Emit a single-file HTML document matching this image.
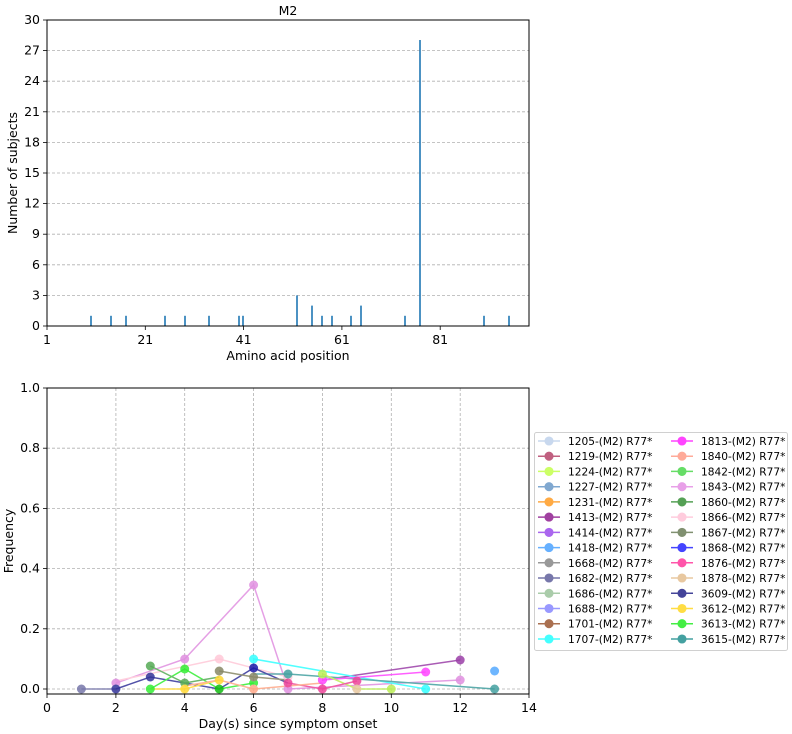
<!DOCTYPE html>
<html><head><meta charset="utf-8"><style>
html,body{margin:0;padding:0;background:#fff}
svg{display:block;font-family:"DejaVu Sans","Liberation Sans",sans-serif}
</style></head><body>
<svg width="792" height="734" viewBox="0 0 792 734" xmlns="http://www.w3.org/2000/svg">
<rect width="792" height="734" fill="#fff"/>
<!-- TOP PLOT -->
<text x="288" y="15" font-size="12.5" text-anchor="middle">M2</text>
<g stroke="#b0b0b0" stroke-dasharray="3,2" stroke-width="0.8">
<line x1="47" x2="529" y1="295.4" y2="295.4"/><line x1="47" x2="529" y1="264.8" y2="264.8"/>
<line x1="47" x2="529" y1="234.2" y2="234.2"/><line x1="47" x2="529" y1="203.6" y2="203.6"/>
<line x1="47" x2="529" y1="173" y2="173"/><line x1="47" x2="529" y1="142.4" y2="142.4"/>
<line x1="47" x2="529" y1="111.8" y2="111.8"/><line x1="47" x2="529" y1="81.2" y2="81.2"/>
<line x1="47" x2="529" y1="50.6" y2="50.6"/>
</g>
<g stroke="#1f77b4" stroke-width="1.6">
<line x1="91" x2="91" y1="326" y2="315.8"/><line x1="111" x2="111" y1="326" y2="315.8"/>
<line x1="126" x2="126" y1="326" y2="315.8"/><line x1="165" x2="165" y1="326" y2="315.8"/>
<line x1="185" x2="185" y1="326" y2="315.8"/><line x1="209" x2="209" y1="326" y2="315.8"/>
<line x1="239" x2="239" y1="326" y2="315.8"/><line x1="243" x2="243" y1="326" y2="315.8"/>
<line x1="297" x2="297" y1="326" y2="295.4"/><line x1="312" x2="312" y1="326" y2="305.6"/>
<line x1="322" x2="322" y1="326" y2="315.8"/><line x1="332" x2="332" y1="326" y2="315.8"/>
<line x1="351" x2="351" y1="326" y2="315.8"/><line x1="361" x2="361" y1="326" y2="305.6"/>
<line x1="405" x2="405" y1="326" y2="315.8"/><line x1="420" x2="420" y1="326" y2="40"/>
<line x1="484" x2="484" y1="326" y2="315.8"/><line x1="509" x2="509" y1="326" y2="315.8"/>
</g>
<rect x="47" y="20" width="482" height="306" fill="none" stroke="#000" stroke-width="1"/>
<g stroke="#000" stroke-width="0.8">
<line x1="43" x2="47" y1="326" y2="326"/><line x1="43" x2="47" y1="295.4" y2="295.4"/><line x1="43" x2="47" y1="264.8" y2="264.8"/><line x1="43" x2="47" y1="234.2" y2="234.2"/><line x1="43" x2="47" y1="203.6" y2="203.6"/><line x1="43" x2="47" y1="173" y2="173"/><line x1="43" x2="47" y1="142.4" y2="142.4"/><line x1="43" x2="47" y1="111.8" y2="111.8"/><line x1="43" x2="47" y1="81.2" y2="81.2"/><line x1="43" x2="47" y1="50.6" y2="50.6"/><line x1="43" x2="47" y1="20" y2="20"/>
<line x1="47" x2="47" y1="326" y2="330"/><line x1="145.3" x2="145.3" y1="326" y2="330"/><line x1="243.6" x2="243.6" y1="326" y2="330"/><line x1="341.9" x2="341.9" y1="326" y2="330"/><line x1="440.2" x2="440.2" y1="326" y2="330"/>
</g>
<g font-size="12.5" text-anchor="end">
<text x="40" y="330">0</text><text x="40" y="299.4">3</text><text x="40" y="268.8">6</text><text x="40" y="238.2">9</text><text x="40" y="207.6">12</text><text x="40" y="177">15</text><text x="40" y="146.4">18</text><text x="40" y="115.8">21</text><text x="40" y="85.2">24</text><text x="40" y="54.6">27</text><text x="40" y="24">30</text>
</g>
<g font-size="12.5" text-anchor="middle">
<text x="47" y="344">1</text><text x="145.3" y="344">21</text><text x="243.6" y="344">41</text><text x="341.9" y="344">61</text><text x="440.2" y="344">81</text>
<text x="288" y="360">Amino acid position</text>
</g>
<text transform="translate(17,173) rotate(-90)" font-size="12.5" text-anchor="middle">Number of subjects</text>

<!-- BOTTOM PLOT -->
<g stroke="#b0b0b0" stroke-dasharray="3,2" stroke-width="0.8">
<line x1="115.9" x2="115.9" y1="388" y2="694"/><line x1="184.7" x2="184.7" y1="388" y2="694"/><line x1="253.6" x2="253.6" y1="388" y2="694"/><line x1="322.4" x2="322.4" y1="388" y2="694"/><line x1="391.3" x2="391.3" y1="388" y2="694"/><line x1="460.2" x2="460.2" y1="388" y2="694"/>
<line x1="47" x2="529" y1="689" y2="689"/><line x1="47" x2="529" y1="628.8" y2="628.8"/><line x1="47" x2="529" y1="568.6" y2="568.6"/><line x1="47" x2="529" y1="508.4" y2="508.4"/><line x1="47" x2="529" y1="448.2" y2="448.2"/>
</g>
<g fill="none" stroke-width="1.5" opacity="0.85">
<polyline stroke="#e08fe0" points="115.9,683 184.7,659 253.6,585 288,689 460.2,680"/>
<polyline stroke="#9b3fa8" points="322.4,680 460.2,660"/>
<polyline stroke="#33ffff" points="253.6,659 425.7,689"/>
<polyline stroke="#ffc8d8" points="115.9,681 219.2,659 288,677"/>
<polyline stroke="#44a0a0" points="253.6,674 288,674 494.6,689"/>
<polyline stroke="#ff44ff" points="322.4,680 425.7,672"/>
<polyline stroke="#333399" points="115.9,689 150.3,677 219.2,689 253.6,668 288,683"/>
<polyline stroke="#7777aa" points="81.4,689 115.9,689"/>
<polyline stroke="#33ee33" points="150.3,689 184.7,669 219.2,689 253.6,683"/>
<polyline stroke="#55aa55" points="150.3,666 184.7,683 219.2,677"/>
<polyline stroke="#bbee55" points="322.4,674 356.9,689 391.3,689"/>
<polyline stroke="#ee4499" points="288,683 322.4,689 356.9,681"/>
<polyline stroke="#ffd833" points="150.3,689 184.7,689 219.2,680"/>
<polyline stroke="#888866" points="219.2,671 253.6,677 288,680"/>
<polyline stroke="#ffa888" points="184.7,686 219.2,680 253.6,689 322.4,683"/>
</g>
<g opacity="0.85">
<circle cx="115.9" cy="683" r="4.5" fill="#e08fe0"/><circle cx="184.7" cy="659" r="4.5" fill="#e08fe0"/><circle cx="253.6" cy="585" r="4.5" fill="#e08fe0"/><circle cx="288" cy="689" r="4.5" fill="#e08fe0"/><circle cx="460.2" cy="680" r="4.5" fill="#e08fe0"/>
<circle cx="322.4" cy="680" r="4.5" fill="#9b3fa8"/><circle cx="460.2" cy="660" r="4.5" fill="#9b3fa8"/>
<circle cx="253.6" cy="659" r="4.5" fill="#33ffff"/><circle cx="425.7" cy="689" r="4.5" fill="#33ffff"/>
<circle cx="219.2" cy="659" r="4.5" fill="#ffc8d8"/><circle cx="288" cy="677" r="4.5" fill="#ffc8d8"/>
<circle cx="288" cy="674" r="4.5" fill="#44a0a0"/><circle cx="494.6" cy="689" r="4.5" fill="#44a0a0"/>
<circle cx="494.6" cy="671" r="4.5" fill="#55aaff"/>
<circle cx="425.7" cy="672" r="4.5" fill="#ff44ff"/><circle cx="322.4" cy="680" r="4.5" fill="#ff44ff"/>
<circle cx="115.9" cy="689" r="4.5" fill="#333399"/><circle cx="150.3" cy="677" r="4.5" fill="#333399"/><circle cx="253.6" cy="668" r="4.5" fill="#1a1aaa"/>
<circle cx="81.4" cy="689" r="4.5" fill="#7777aa"/>
<circle cx="150.3" cy="689" r="4.5" fill="#33ee33"/><circle cx="184.7" cy="669" r="4.5" fill="#33ee33"/><circle cx="219.2" cy="689" r="4.5" fill="#11bb11"/><circle cx="253.6" cy="683" r="4.5" fill="#33ee33"/>
<circle cx="150.3" cy="666" r="4.5" fill="#55aa55"/><circle cx="184.7" cy="683" r="4.5" fill="#55aa55"/>
<circle cx="322.4" cy="674" r="4.5" fill="#bbee55"/><circle cx="391.3" cy="689" r="4.5" fill="#bbee55"/>
<circle cx="288" cy="683" r="4.5" fill="#ee4499"/><circle cx="322.4" cy="689" r="4.5" fill="#ee4499"/><circle cx="356.9" cy="681" r="4.5" fill="#ee4499"/>
<circle cx="184.7" cy="689" r="4.5" fill="#ffd833"/><circle cx="219.2" cy="680" r="4.5" fill="#ffd833"/>
<circle cx="219.2" cy="671" r="4.5" fill="#888866"/><circle cx="253.6" cy="677" r="4.5" fill="#888866"/>
<circle cx="253.6" cy="689" r="4.5" fill="#ffa888"/><circle cx="356.9" cy="689" r="4.5" fill="#e8c8a0"/>
</g>
<rect x="47" y="388" width="482" height="306" fill="none" stroke="#000" stroke-width="1"/>
<g stroke="#000" stroke-width="0.8">
<line x1="43" x2="47" y1="689" y2="689"/><line x1="43" x2="47" y1="628.8" y2="628.8"/><line x1="43" x2="47" y1="568.6" y2="568.6"/><line x1="43" x2="47" y1="508.4" y2="508.4"/><line x1="43" x2="47" y1="448.2" y2="448.2"/><line x1="43" x2="47" y1="388" y2="388"/>
<line x1="47" x2="47" y1="694" y2="698"/><line x1="115.9" x2="115.9" y1="694" y2="698"/><line x1="184.7" x2="184.7" y1="694" y2="698"/><line x1="253.6" x2="253.6" y1="694" y2="698"/><line x1="322.4" x2="322.4" y1="694" y2="698"/><line x1="391.3" x2="391.3" y1="694" y2="698"/><line x1="460.2" x2="460.2" y1="694" y2="698"/><line x1="529" x2="529" y1="694" y2="698"/>
</g>
<g font-size="12.5" text-anchor="end">
<text x="40" y="693">0.0</text><text x="40" y="632.8">0.2</text><text x="40" y="572.6">0.4</text><text x="40" y="512.4">0.6</text><text x="40" y="452.2">0.8</text><text x="40" y="392">1.0</text>
</g>
<g font-size="12.5" text-anchor="middle">
<text x="47" y="712">0</text><text x="115.9" y="712">2</text><text x="184.7" y="712">4</text><text x="253.6" y="712">6</text><text x="322.4" y="712">8</text><text x="391.3" y="712">10</text><text x="460.2" y="712">12</text><text x="529" y="712">14</text>
<text x="288" y="728">Day(s) since symptom onset</text>
</g>
<text transform="translate(13,541) rotate(-90)" font-size="12.5" text-anchor="middle">Frequency</text>

<!-- LEGEND -->
<rect x="534.5" y="432.5" width="253" height="218" rx="2" fill="#fff" stroke="#d0d0d0"/>
<g font-size="10.5">
<g id="c1">
</g>
</g>
<g font-size="10.6" fill="#000">
<text x="568" y="445">1205-(M2) R77*</text><text x="568" y="460.2">1219-(M2) R77*</text><text x="568" y="475.4">1224-(M2) R77*</text><text x="568" y="490.7">1227-(M2) R77*</text><text x="568" y="505.9">1231-(M2) R77*</text><text x="568" y="521.1">1413-(M2) R77*</text><text x="568" y="536.4">1414-(M2) R77*</text><text x="568" y="551.6">1418-(M2) R77*</text><text x="568" y="566.8">1668-(M2) R77*</text><text x="568" y="582">1682-(M2) R77*</text><text x="568" y="597.3">1686-(M2) R77*</text><text x="568" y="612.5">1688-(M2) R77*</text><text x="568" y="627.7">1701-(M2) R77*</text><text x="568" y="643">1707-(M2) R77*</text>
<text x="701" y="445">1813-(M2) R77*</text><text x="701" y="460.2">1840-(M2) R77*</text><text x="701" y="475.4">1842-(M2) R77*</text><text x="701" y="490.7">1843-(M2) R77*</text><text x="701" y="505.9">1860-(M2) R77*</text><text x="701" y="521.1">1866-(M2) R77*</text><text x="701" y="536.4">1867-(M2) R77*</text><text x="701" y="551.6">1868-(M2) R77*</text><text x="701" y="566.8">1876-(M2) R77*</text><text x="701" y="582">1878-(M2) R77*</text><text x="701" y="597.3">3609-(M2) R77*</text><text x="701" y="612.5">3612-(M2) R77*</text><text x="701" y="627.7">3613-(M2) R77*</text><text x="701" y="643">3615-(M2) R77*</text>
</g>
<g stroke-width="1.5">
<g stroke="#c8d8ee" fill="#c8d8ee"><line x1="538" x2="560" y1="441" y2="441"/><circle cx="549" cy="441" r="3.8"/></g>
<g stroke="#c06080" fill="#c06080"><line x1="538" x2="560" y1="456.2" y2="456.2"/><circle cx="549" cy="456.2" r="3.8"/></g>
<g stroke="#ccff66" fill="#ccff66"><line x1="538" x2="560" y1="471.4" y2="471.4"/><circle cx="549" cy="471.4" r="3.8"/></g>
<g stroke="#80a8d0" fill="#80a8d0"><line x1="538" x2="560" y1="486.7" y2="486.7"/><circle cx="549" cy="486.7" r="3.8"/></g>
<g stroke="#ffaa44" fill="#ffaa44"><line x1="538" x2="560" y1="501.9" y2="501.9"/><circle cx="549" cy="501.9" r="3.8"/></g>
<g stroke="#a040a0" fill="#a040a0"><line x1="538" x2="560" y1="517.1" y2="517.1"/><circle cx="549" cy="517.1" r="3.8"/></g>
<g stroke="#aa66ee" fill="#aa66ee"><line x1="538" x2="560" y1="532.4" y2="532.4"/><circle cx="549" cy="532.4" r="3.8"/></g>
<g stroke="#66b0ff" fill="#66b0ff"><line x1="538" x2="560" y1="547.6" y2="547.6"/><circle cx="549" cy="547.6" r="3.8"/></g>
<g stroke="#999999" fill="#999999"><line x1="538" x2="560" y1="562.8" y2="562.8"/><circle cx="549" cy="562.8" r="3.8"/></g>
<g stroke="#7777aa" fill="#7777aa"><line x1="538" x2="560" y1="578" y2="578"/><circle cx="549" cy="578" r="3.8"/></g>
<g stroke="#aaccaa" fill="#aaccaa"><line x1="538" x2="560" y1="593.3" y2="593.3"/><circle cx="549" cy="593.3" r="3.8"/></g>
<g stroke="#9999ff" fill="#9999ff"><line x1="538" x2="560" y1="608.5" y2="608.5"/><circle cx="549" cy="608.5" r="3.8"/></g>
<g stroke="#aa7050" fill="#aa7050"><line x1="538" x2="560" y1="623.7" y2="623.7"/><circle cx="549" cy="623.7" r="3.8"/></g>
<g stroke="#44ffff" fill="#44ffff"><line x1="538" x2="560" y1="639" y2="639"/><circle cx="549" cy="639" r="3.8"/></g>
<g stroke="#ff44ff" fill="#ff44ff"><line x1="671" x2="693" y1="441" y2="441"/><circle cx="682" cy="441" r="3.8"/></g>
<g stroke="#ffaa99" fill="#ffaa99"><line x1="671" x2="693" y1="456.2" y2="456.2"/><circle cx="682" cy="456.2" r="3.8"/></g>
<g stroke="#66dd66" fill="#66dd66"><line x1="671" x2="693" y1="471.4" y2="471.4"/><circle cx="682" cy="471.4" r="3.8"/></g>
<g stroke="#e8a0e8" fill="#e8a0e8"><line x1="671" x2="693" y1="486.7" y2="486.7"/><circle cx="682" cy="486.7" r="3.8"/></g>
<g stroke="#55a055" fill="#55a055"><line x1="671" x2="693" y1="501.9" y2="501.9"/><circle cx="682" cy="501.9" r="3.8"/></g>
<g stroke="#ffccdd" fill="#ffccdd"><line x1="671" x2="693" y1="517.1" y2="517.1"/><circle cx="682" cy="517.1" r="3.8"/></g>
<g stroke="#809070" fill="#809070"><line x1="671" x2="693" y1="532.4" y2="532.4"/><circle cx="682" cy="532.4" r="3.8"/></g>
<g stroke="#4444ff" fill="#4444ff"><line x1="671" x2="693" y1="547.6" y2="547.6"/><circle cx="682" cy="547.6" r="3.8"/></g>
<g stroke="#ff55aa" fill="#ff55aa"><line x1="671" x2="693" y1="562.8" y2="562.8"/><circle cx="682" cy="562.8" r="3.8"/></g>
<g stroke="#e8c8a0" fill="#e8c8a0"><line x1="671" x2="693" y1="578" y2="578"/><circle cx="682" cy="578" r="3.8"/></g>
<g stroke="#444499" fill="#444499"><line x1="671" x2="693" y1="593.3" y2="593.3"/><circle cx="682" cy="593.3" r="3.8"/></g>
<g stroke="#ffdd44" fill="#ffdd44"><line x1="671" x2="693" y1="608.5" y2="608.5"/><circle cx="682" cy="608.5" r="3.8"/></g>
<g stroke="#44ee44" fill="#44ee44"><line x1="671" x2="693" y1="623.7" y2="623.7"/><circle cx="682" cy="623.7" r="3.8"/></g>
<g stroke="#44a0a0" fill="#44a0a0"><line x1="671" x2="693" y1="639" y2="639"/><circle cx="682" cy="639" r="3.8"/></g>
</g>
</svg>
</body></html>
